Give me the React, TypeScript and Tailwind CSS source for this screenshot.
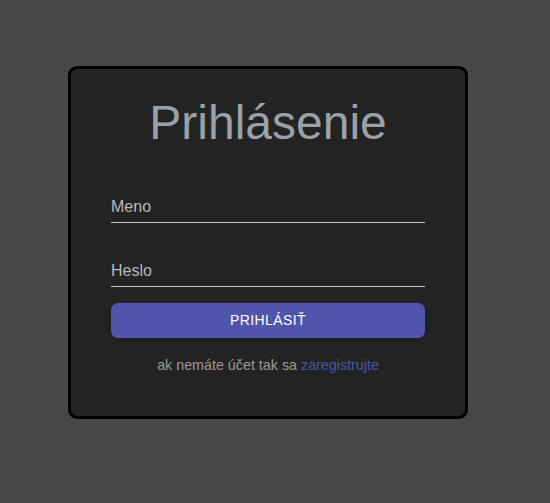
export default function App() {
  return (
    <div className="min-h-[503px] w-full bg-[#474747] pt-[66px] pl-[68px] font-['Liberation_Sans',Arial,sans-serif]">
      <div className="w-[400px] h-[353px] rounded-[9px] border-[3px] border-black bg-[#232323] px-[40px] pt-[26px]">
        <h1 className="text-center text-[48px] leading-[56px] text-[#9ba1a8]">Prihlásenie</h1>

        <div className="mt-[38px]">
          <div className="border-b border-[#c8c8c8] pb-[3px] pt-[6px]">
            <span className="text-[16px] leading-[18px] text-[#b8b8b8]">Meno</span>
          </div>
          <div className="mt-[34px] border-b border-[#c8c8c8] pb-[3px] pt-[2px]">
            <span className="text-[16px] leading-[18px] text-[#b8b8b8]">Heslo</span>
          </div>
        </div>

        <button className="mt-[16px] flex h-[35px] w-full items-center justify-center rounded-[7px] bg-[#5054ab] text-[14px] tracking-[0.4px] text-white shadow-md">
          PRIHLÁSIŤ
        </button>

        <p className="mt-[17px] text-center text-[14.3px] text-[#9b9b9b]">
          ak nemáte účet tak sa <a className="text-[#5054ab]">zaregistrujte</a>
        </p>
      </div>
    </div>
  );
}
